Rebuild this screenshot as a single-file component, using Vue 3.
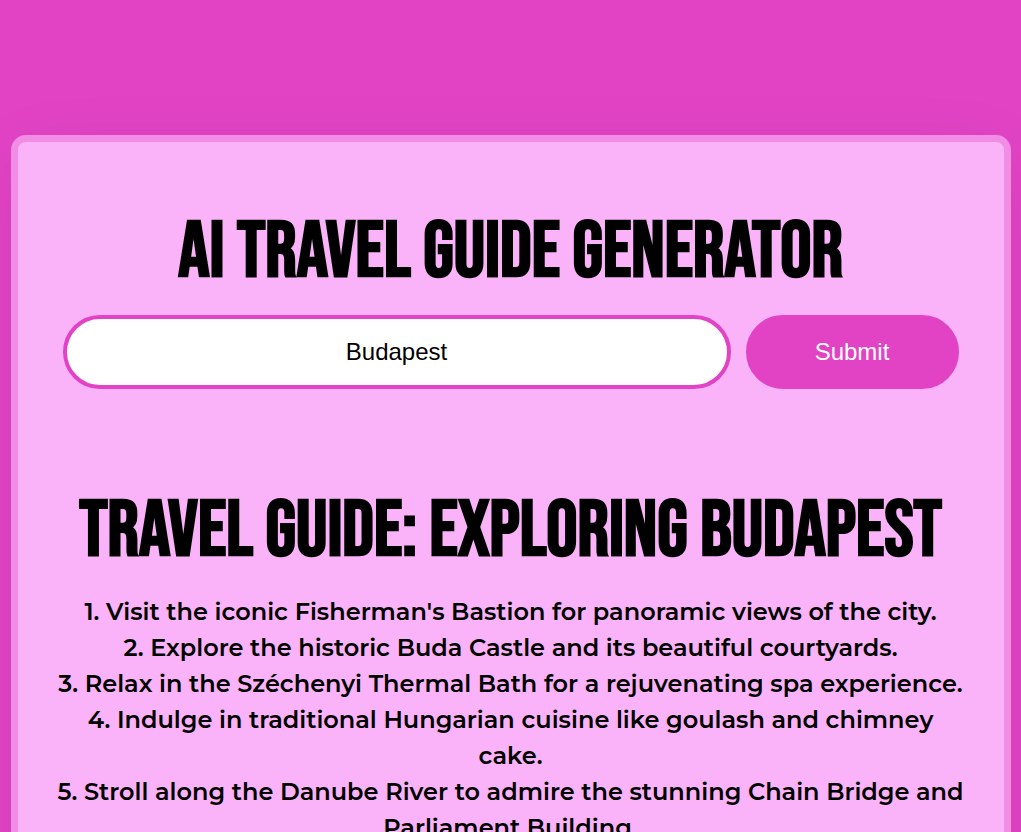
<script setup>
import { ref } from 'vue'

const destination = ref('Budapest')
const title = ref('Budapest')
const tips = [
  "Visit the iconic Fisherman's Bastion for panoramic views of the city.",
  'Explore the historic Buda Castle and its beautiful courtyards.',
  'Relax in the Széchenyi Thermal Bath for a rejuvenating spa experience.',
  'Indulge in traditional Hungarian cuisine like goulash and chimney cake.',
  'Stroll along the Danube River to admire the stunning Chain Bridge and Parliament Building.',
]

function submit() {
  title.value = destination.value
}
</script>

<template>
  <main class="page">
    <div class="card">
      <h1 class="heading">AI Travel Guide Generator</h1>
      <form class="search" @submit.prevent="submit">
        <input v-model="destination" class="field" type="text" aria-label="Destination" />
        <button class="submit" type="submit">Submit</button>
      </form>
      <section class="guide">
        <h2 class="heading">Travel Guide: Exploring {{ title }}</h2>
        <p v-for="(tip, i) in tips" :key="i" class="tip">{{ i + 1 }}. {{ tip }}</p>
      </section>
    </div>
  </main>
</template>

<style>
body {
  background: #e143c4;
}
</style>

<style scoped>
.page {
  padding: 135px 10px 0;
}
.card {
  box-sizing: border-box;
  max-width: 1000px;
  margin: 0 auto;
  padding: 71px 38px 40px;
  border: 7px solid #f28de6;
  border-radius: 15px;
  background: #fab3f8;
  box-shadow: 0 20px 80px rgba(0, 0, 0, 0.06);
  text-align: center;
  color: #000;
}
.heading {
  margin: 0;
  font-family: "Bebas Neue", "Liberation Sans Narrow", "Liberation Sans", sans-serif;
  font-size: 78px;
  font-weight: 700;
  line-height: 80px;
  text-transform: uppercase;
}
.search {
  display: flex;
  gap: 15px;
  padding: 0 7px;
  margin-top: 22px;
}
.field,
.submit {
  box-sizing: border-box;
  height: 74px;
  border: 4px solid #e143c4;
  border-radius: 37px;
  font-family: "Liberation Sans", Arial, sans-serif;
  font-size: 24px;
}
.field {
  flex: 1;
  min-width: 0;
  background: #fff;
  color: #000;
  text-align: center;
  outline: none;
}
.submit {
  width: 213px;
  background: #e143c4;
  color: #fff;
  cursor: pointer;
}
.guide {
  margin-top: 103px;
}
.guide .heading {
  margin-bottom: 22px;
}
.tip {
  margin: 0;
  font-family: Montserrat, Inter, sans-serif;
  font-size: 24px;
  font-weight: 600;
  line-height: 36px;
}
</style>
